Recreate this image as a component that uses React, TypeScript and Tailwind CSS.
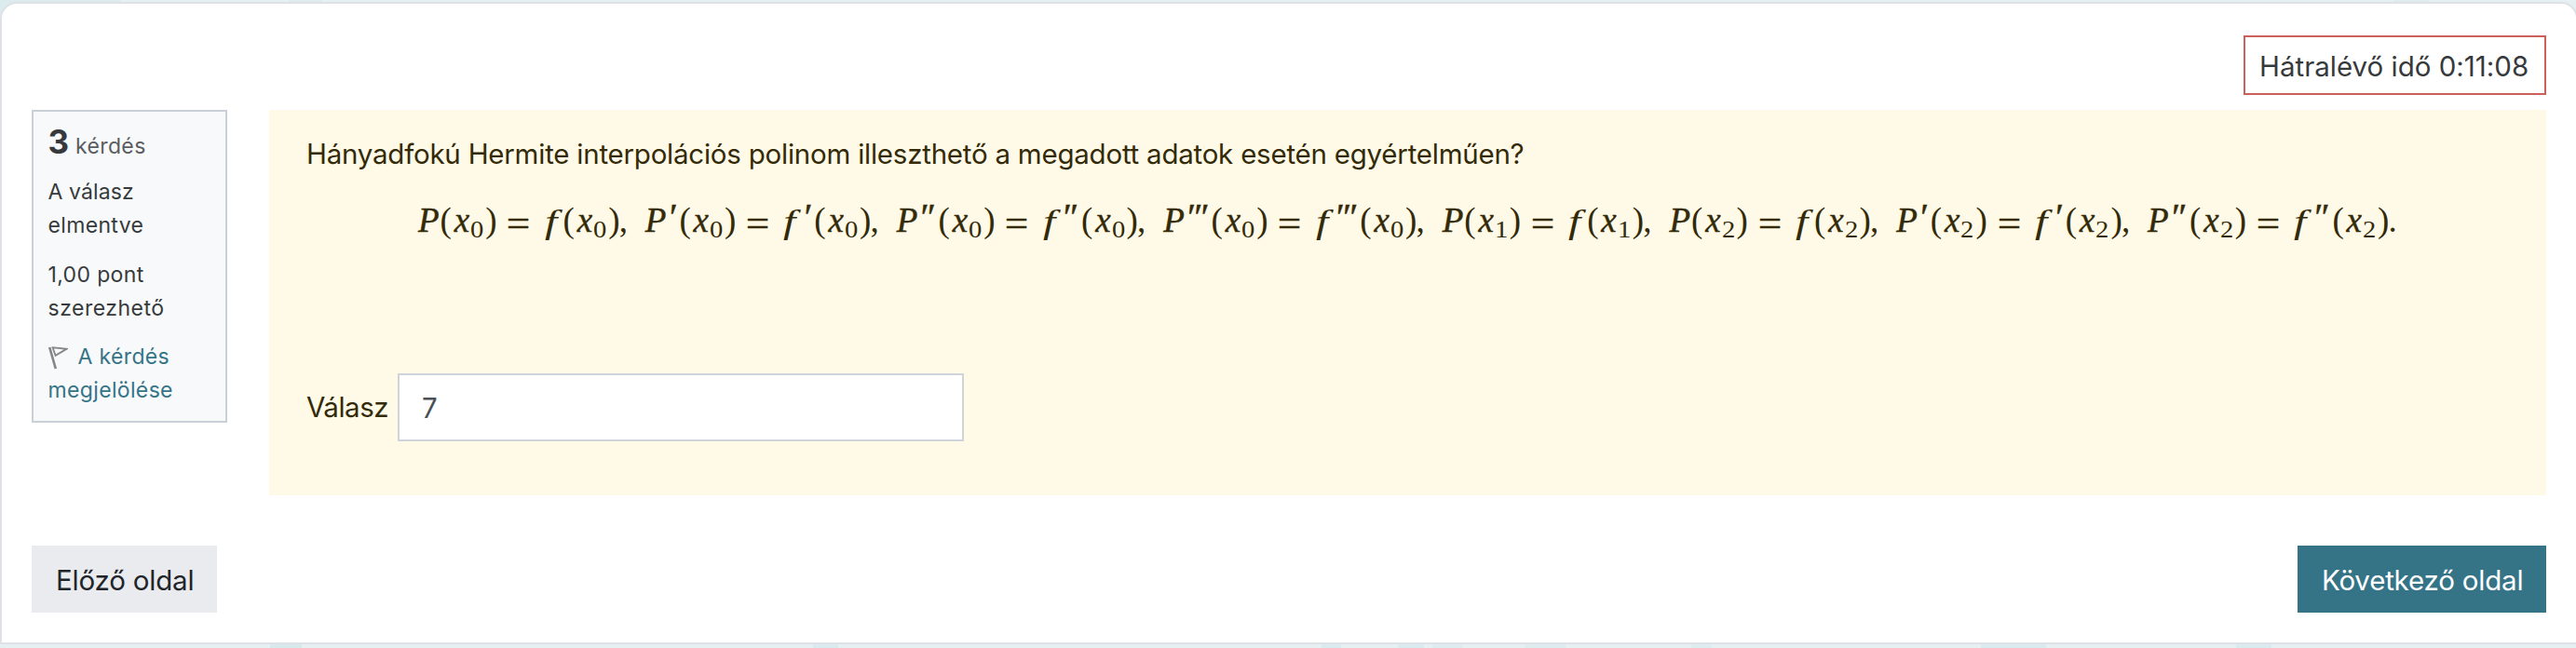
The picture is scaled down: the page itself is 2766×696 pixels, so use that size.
import React from 'react';

type Term = { primes: number; index: string; end: string };

const terms: Term[] = [
  { primes: 0, index: '0', end: ',' },
  { primes: 1, index: '0', end: ',' },
  { primes: 2, index: '0', end: ',' },
  { primes: 3, index: '0', end: ',' },
  { primes: 0, index: '1', end: ',' },
  { primes: 0, index: '2', end: ',' },
  { primes: 1, index: '2', end: ',' },
  { primes: 2, index: '2', end: '.' },
];

const primeWidths = ['w-0', 'w-[13px]', 'w-[21.4px]', 'w-[27.8px]'];

function Primes({ count }: { count: number }) {
  if (count === 0) return null;
  return (
    <span
      className={`relative -top-[3px] inline-block text-[40px] italic tracking-[-1.5px] [-webkit-text-stroke:0.5px_currentColor] ${primeWidths[count]}`}
    >
      {'′'.repeat(count)}
    </span>
  );
}

function Argument({ index, closeClass }: { index: string; closeClass: string }) {
  return (
    <>
      <span className="inline-block w-[15.2px]">(</span>
      <span className="inline-block w-[16.4px] italic [-webkit-text-stroke:0.4px_currentColor]">x</span>
      <span className="relative top-1.5 inline-block w-[17px] pl-px text-[26px]">
        <span className="inline-block origin-left scale-x-110">{index}</span>
      </span>
      <span className={closeClass}>)</span>
    </>
  );
}

function FormulaTerm({ primes, index, end }: Term) {
  return (
    <span className="flex items-baseline">
      <span className="inline-block w-[23.6px] italic [-webkit-text-stroke:0.5px_currentColor]">P</span>
      <Primes count={primes} />
      <Argument index={index} closeClass="inline-block w-[23.2px]" />
      <span className="relative top-1 inline-block w-[40.2px]">
        <span className="inline-block origin-left scale-x-[1.2] [-webkit-text-stroke:0.6px_currentColor]">=</span>
      </span>
      <span className="inline-block w-5">
        <span className="inline-block origin-bottom-left scale-x-[1.3] scale-y-[0.94] italic">f</span>
      </span>
      <Primes count={primes} />
      <Argument index={index} closeClass="inline-block w-[11.5px]" />
      <span className="inline-block w-[28.2px]">{end}</span>
    </span>
  );
}

function FlagIcon() {
  return (
    <svg className="mr-[11px] inline-block h-[25px] w-[21px] align-[-6px]" viewBox="0 0 21 25" fill="none" stroke="#858585">
      <path d="M1.2 1 7.8 24" strokeWidth="2.6" />
      <path d="M3.6 1.2 19.5 2.8 7.6 9.8 4.6 1.5" strokeWidth="1.8" />
    </svg>
  );
}

function QuestionInfo() {
  return (
    <aside className="h-[336px] w-[210px] shrink-0 border-2 border-[#cad0d7] bg-[#f8f9fb] px-[15.5px] text-[23px] leading-9 tracking-[0.35px] text-[#373a3c]">
      <h3 className="mt-3 h-10 whitespace-nowrap leading-10 text-[#5a5d60]">
        <span className="text-[35px] font-bold tracking-normal text-[#373a3c]">3</span>
        <span className="ml-[7px]">kérdés</span>
      </h3>
      <p className="mt-4">
        <span className="tracking-[0.1px]">A válasz</span>
        <br />
        elmentve
      </p>
      <p className="mt-[17px]">
        1,00 pont
        <br />
        <span className="tracking-[0.5px]">szerezhető</span>
      </p>
      <a className="mt-4 block text-[#357487]">
        <FlagIcon />A kérdés
        <br />
        megjelölése
      </a>
    </aside>
  );
}

export default function App() {
  return (
    <div className="h-[696px] overflow-hidden bg-[#e6f0f2] font-['Inter',sans-serif] text-[29.5px] text-[#373a3c] [font-variant-ligatures:none]">
      <div className="flex h-[20px]">
        <div className="w-[130px] bg-[#dcebee]" />
        <div className="ml-[180px] w-[36px] bg-[#dfecef]" />
        <div className="ml-auto mr-[158px] w-[38px] bg-[#dfecef]" />
      </div>
      <main className="relative -mt-[18px] flex h-[690px] w-[2768px] flex-col rounded-t-[18px] border-2 border-[#dee2e6] bg-white pl-8 pr-8 pt-[34px]">
        <div className="flex h-16 w-[325px] items-center self-end border-2 border-[#cb5f5a] pl-[15px] pt-0.5">
          <span className="whitespace-nowrap">Hátralévő idő 0:11:08</span>
        </div>
        <div className="mt-4 flex justify-between">
          <QuestionInfo />
          <section className="h-[414px] w-[2445px] bg-[#fff9e8] pl-10 text-[#332a08]">
            <p className="pt-[25px] leading-[44px] tracking-[-0.235px]">
              Hányadfokú Hermite interpolációs polinom illeszthető a megadott adatok esetén egyértelműen?
            </p>
            <div className="mt-[25px] flex h-12 items-baseline whitespace-nowrap pl-[120px] font-['Liberation_Serif',serif] text-[37px] leading-[48px]">
              {terms.map((term, i) => (
                <FormulaTerm key={i} {...term} />
              ))}
            </div>
            <div className="mt-[141px] flex h-[73px] items-center">
              <label className="w-[98px] tracking-[-0.5px]">Válasz</label>
              <input
                className="h-[73px] w-[608px] border-2 border-[#ced4da] bg-white px-6 text-[#495057] outline-none"
                defaultValue="7"
              />
            </div>
          </section>
        </div>
        <div className="mt-[54px] flex justify-between tracking-[-0.2px]">
          <button className="h-[72px] w-[199px] bg-[#e9ebef] pl-[26px] pt-[3px] text-left text-[#212529]">Előző oldal</button>
          <button className="h-[72px] w-[267px] bg-[#357487] pl-[26px] pt-[3px] text-left text-white">Következő oldal</button>
        </div>
      </main>
      <div className="flex h-1">
        <div className="ml-[290px] w-[34px] bg-[#d6eaec]" />
        <div className="ml-[549px] w-[27px] bg-[#d9ebee]" />
        <div className="ml-[519px] w-[21px] bg-[#d9ebee]" />
        <div className="ml-[61px] w-[28px] bg-[#d9ebee]" />
        <div className="ml-[9px] w-[33px] bg-[#dcecef]" />
        <div className="ml-[66px] w-[44px] bg-[#dcecef]" />
        <div className="ml-[135px] w-[22px] bg-[#dcecef]" />
        <div className="ml-[289px] w-[70px] bg-[#d9ebee]" />
        <div className="ml-[204px] w-[38px] bg-[#d9ebee]" />
      </div>
    </div>
  );
}
